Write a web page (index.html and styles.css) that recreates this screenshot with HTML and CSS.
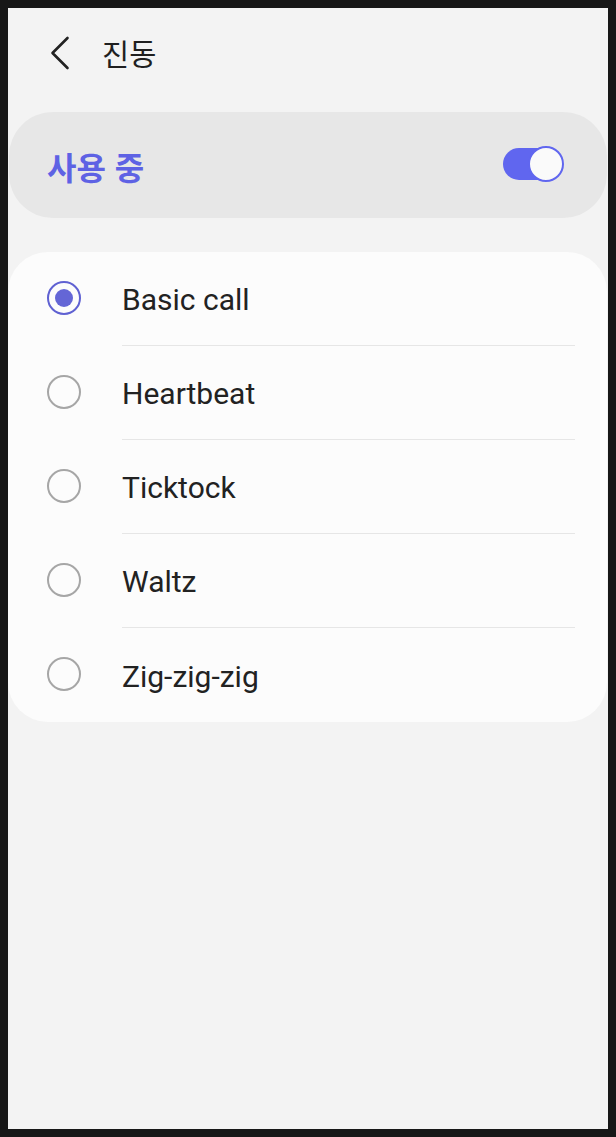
FILE: index.html
```
<!DOCTYPE html>
<html lang="ko">
<head>
<meta charset="utf-8">
<title>진동</title>
<link rel="stylesheet" href="styles.css">
</head>
<body>
<div class="frame">
  <div class="screen">
    <header class="header">
      <svg class="back" width="24" height="34" viewBox="0 0 24 34" aria-hidden="true">
        <path d="M19.5 2 L4.5 17 L19.5 32" fill="none" stroke="#222" stroke-width="2.6" stroke-linecap="round" stroke-linejoin="round"/>
      </svg>
      <h1 class="title">진동</h1>
    </header>

    <section class="master">
      <span class="master-label">사용 중</span>
      <span class="switch" role="switch" aria-checked="true">
        <span class="switch-track"></span>
        <span class="switch-thumb"></span>
      </span>
    </section>

    <ul class="list">
      <li class="row">
        <span class="radio-cell"><span class="radio radio-on"><span class="radio-dot"></span></span></span>
        <span class="label">Basic call</span>
      </li>
      <li class="row">
        <span class="radio-cell"><span class="radio"></span></span>
        <span class="label">Heartbeat</span>
      </li>
      <li class="row">
        <span class="radio-cell"><span class="radio"></span></span>
        <span class="label">Ticktock</span>
      </li>
      <li class="row">
        <span class="radio-cell"><span class="radio"></span></span>
        <span class="label">Waltz</span>
      </li>
      <li class="row">
        <span class="radio-cell"><span class="radio"></span></span>
        <span class="label label-last">Zig-zig-zig</span>
      </li>
    </ul>
  </div>
</div>
</body>
</html>
```

FILE: styles.css
```
* {
  box-sizing: border-box;
}

html, body {
  margin: 0;
  padding: 0;
  background: #171717;
}

.frame {
  width: 616px;
  height: 1137px;
  padding: 8px;
  background: #171717;
}

.screen {
  width: 600px;
  height: 1121px;
  background: #f3f3f3;
  display: flex;
  flex-direction: column;
  font-family: Roboto, "Noto Sans CJK KR", "Noto Sans", sans-serif;
  color: #212121;
}

.header {
  height: 90px;
  display: flex;
  align-items: center;
  padding-left: 40px;
}

.back {
  display: block;
  flex: none;
}

.title {
  margin: 0 0 0 30px;
  font-family: "Noto Sans CJK KR", sans-serif;
  font-size: 29.5px;
  font-weight: 400;
  color: #1f1f1f;
  line-height: 1;
}

.master {
  margin: 14px 1px 0 1px;
  height: 106px;
  border-radius: 44px;
  background: #e7e7e7;
  display: flex;
  align-items: center;
  justify-content: space-between;
  padding: 0 43px 0 38px;
}

.master-label {
  font-family: "Noto Sans CJK KR", sans-serif;
  font-size: 32px;
  font-weight: 700;
  color: #5e62e4;
  line-height: 1;
  margin-top: 1px;
}

.switch {
  position: relative;
  width: 61px;
  height: 36px;
  display: block;
  margin-top: -3px;
}

.switch-track {
  position: absolute;
  left: 0;
  top: 2px;
  width: 56px;
  height: 32px;
  border-radius: 16px;
  background: #6066ef;
}

.switch-thumb {
  position: absolute;
  right: 0;
  top: 0;
  width: 36px;
  height: 36px;
  border-radius: 50%;
  background: #fafafa;
  border: 2px solid #6066ef;
}

.list {
  list-style: none;
  margin: 34px 1px 0 0;
  padding: 0;
  background: #fcfcfc;
  border-radius: 40px;
}

.row {
  height: 94px;
  display: flex;
  align-items: stretch;
}

.radio-cell {
  width: 114px;
  flex: none;
  display: flex;
  align-items: center;
  padding-left: 39px;
}

.radio {
  width: 34px;
  height: 34px;
  border-radius: 50%;
  border: 2px solid #a6a6a6;
  display: flex;
  align-items: center;
  justify-content: center;
  margin-top: -2px;
}

.radio-on {
  border: 2px solid #5f61d2;
}

.radio-dot {
  width: 18px;
  height: 18px;
  border-radius: 50%;
  background: #6466d6;
}

.label {
  flex: 1;
  margin-right: 32px;
  display: flex;
  align-items: center;
  font-size: 30px;
  font-weight: 400;
  color: #222222;
  border-bottom: 1px solid #e6e6e6;
  padding-top: 2px;
}

.label-last {
  border-bottom: none;
}
```
